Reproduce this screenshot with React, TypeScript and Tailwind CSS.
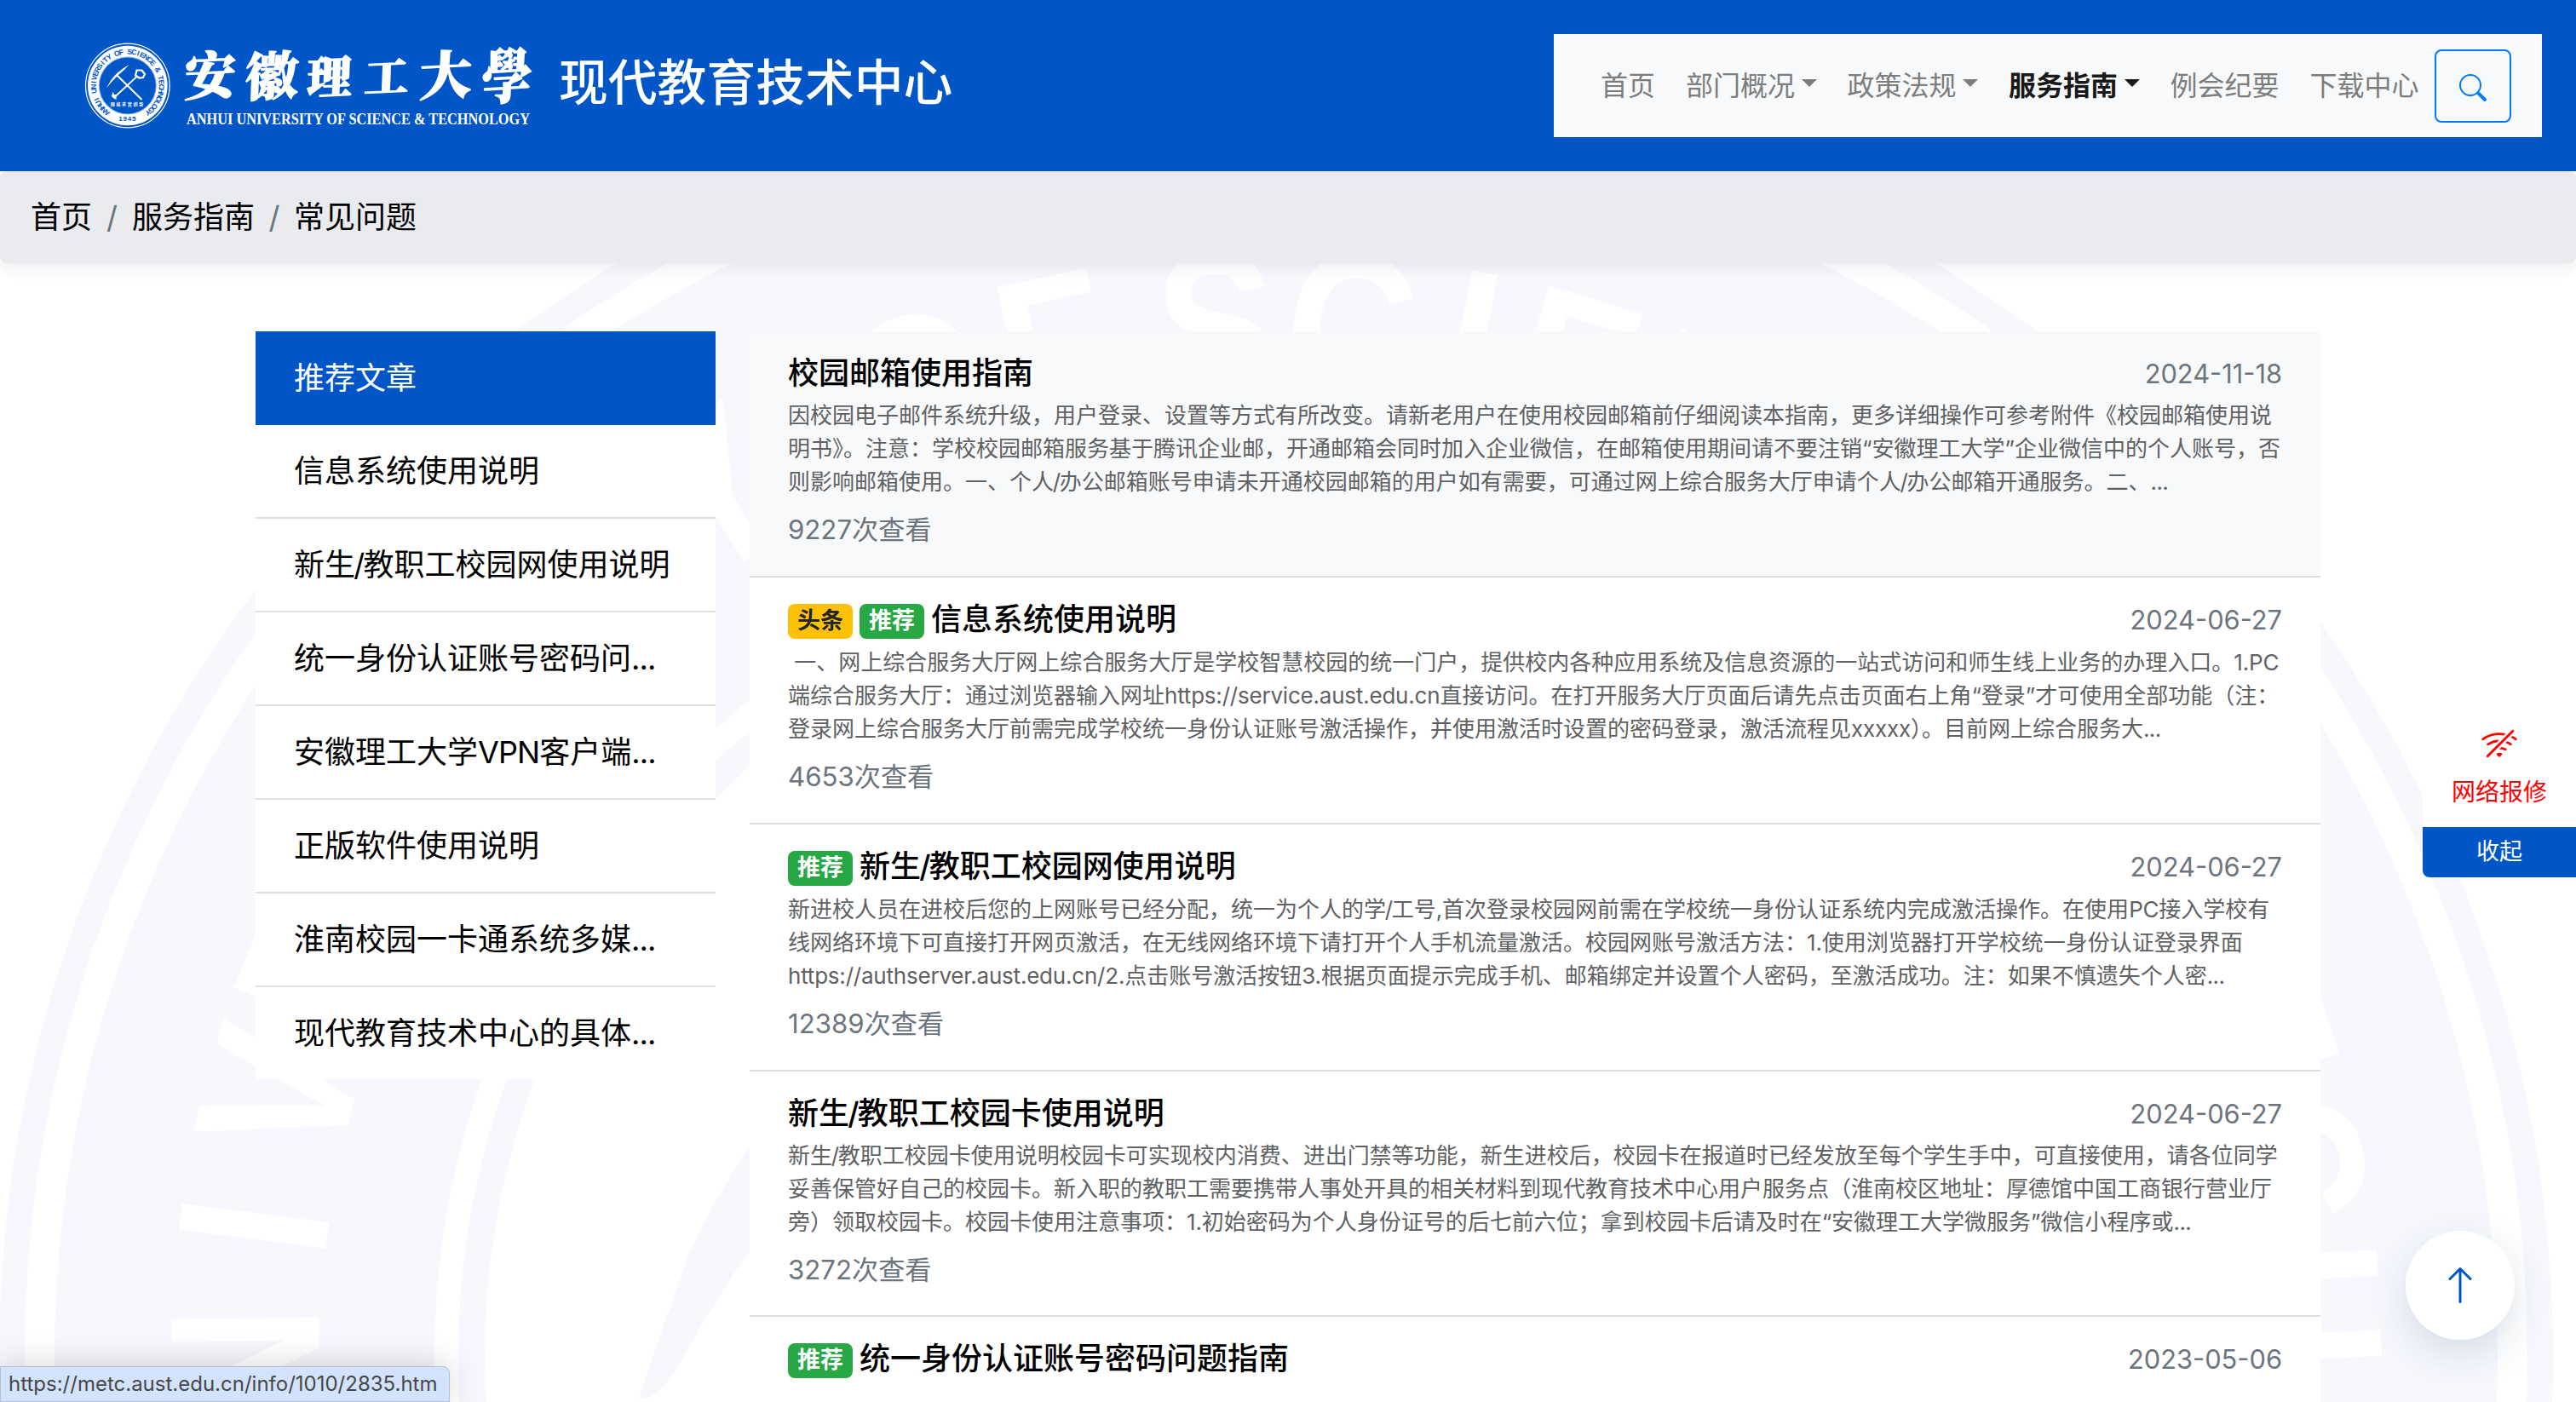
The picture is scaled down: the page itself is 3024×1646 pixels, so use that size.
import type { ReactNode } from "react";
import { BsArrowUp, BsSearch, BsWifiOff } from "react-icons/bs";

const polar = (cx: number, cy: number, r: number, deg: number) => {
  const a = (deg * Math.PI) / 180;
  return [cx + r * Math.sin(a), cy - r * Math.cos(a)];
};

type RingLetter = [string, number];

const WATERMARK_RING: RingLetter[] = [
  ["N", -90.8], ["I", -82.7], ["V", -75.2], ["E", -68], ["R", -61], ["S", -54], ["I", -48.7],
  ["T", -42], ["Y", -33], ["O", -20.2], ["F", -12.4], ["S", -3.3], ["C", 4.2], ["I", 10.9],
  ["E", 16.8], ["N", 24.2], ["C", 32], ["E", 39.5], ["&", 51], ["T", 64], ["E", 71.5],
  ["C", 79.1], ["H", 87.2],
];

/** Oversized pale university seal behind the page content. */
function Watermark() {
  const cx = 1498;
  const cy = 1593;
  return (
    <svg className="pointer-events-none absolute inset-0 h-[1646px] w-[3024px]" viewBox="0 0 3024 1646">
      <circle cx={cx} cy={cy} r="1484" fill="none" stroke="#f7f8fe" strokeWidth="30" />
      <circle cx={cx} cy={cy} r="1434" fill="#f7f8fe" />
      <circle cx={cx} cy={cy} r="988" fill="#fff" />
      <circle cx={cx} cy={cy} r="944.5" fill="none" stroke="#f7f8fe" strokeWidth="31" />
      {WATERMARK_RING.map(([ch, deg], i) => {
        const [x, y] = polar(cx, cy, 1123, deg);
        return (
          <text
            key={i}
            className="font-['Liberation_Sans',sans-serif] text-[252px] font-bold"
            fill="#fff"
            textAnchor="middle"
            transform={`translate(${x} ${y}) rotate(${deg}) scale(0.84 1)`}
          >
            {ch}
          </text>
        );
      })}
      <path fill="#f7f8fe" d="M1400 800Q1060 1040 879 1346L838 1413L806 1478Q772 1577 750 1642Q766 1642 778 1629L792 1612Q830 1540 879 1470Q1100 1150 1500 900Z" />
    </svg>
  );
}

const SEAL_TEXT = "ANHUI UNIVERSITY OF SCIENCE & TECHNOLOGY";

const CALLIGRAPHY = [
  { ch: "安", x: 216, y: 112, size: 60, sx: 1 },
  { ch: "徽", x: 288, y: 113, size: 61, sx: 1 },
  { ch: "理", x: 360, y: 111, size: 52, sx: 1 },
  { ch: "工", x: 427, y: 109, size: 48, sx: 1.08 },
  { ch: "大", x: 492, y: 112, size: 61, sx: 1 },
  { ch: "學", x: 565, y: 117, size: 70, sx: 0.84 },
];

function Brand() {
  const cx = 149.8;
  const cy = 100.5;
  return (
    <svg className="h-[200px] w-[1140px] shrink-0" viewBox="0 0 1140 200">
      <circle cx={cx} cy={cy} r="49.3" fill="none" stroke="#fff" strokeWidth="1.2" />
      <circle cx={cx} cy={cy} r="46.8" fill="#fff" />
      <circle cx={cx} cy={cy} r="33" fill="#0056c7" stroke="#0056c7" strokeOpacity=".45" strokeWidth="2" />
      <circle cx={cx} cy={cy} r="31.6" fill="#0056c7" />
      {SEAL_TEXT.split("").map((ch, i) => {
        const deg = -143 + (i * 286) / (SEAL_TEXT.length - 1);
        const [x, y] = polar(cx, cy, 37, deg);
        return (
          <text
            key={i}
            className="font-['Liberation_Sans',sans-serif] text-[8.6px] font-bold"
            fill="#0056c7"
            textAnchor="middle"
            transform={`translate(${x} ${y}) rotate(${deg})`}
          >
            {ch}
          </text>
        );
      })}
      <text x={cx} y="142.3" textAnchor="middle" fill="#0056c7" className="font-['Liberation_Sans',sans-serif] text-[8px] font-bold tracking-[0.8px]">
        1945
      </text>
      <g fill="none" stroke="#fff">
        <path strokeWidth="2" strokeLinecap="round" d="M137.5 88.5L166 116.5" />
        <path strokeWidth="1.8" strokeLinecap="round" d="M135 113.5L160 90.5" />
        <path strokeWidth="2.2" d="M160.5 82.5H166.500L170 87L168 91L163.500 91.500L159 88.500Z" />
      </g>
      <path fill="#fff" d="M151.500 76Q137 84 130 94.500Q126.500 100.500 125.500 103Q129 98 134 93L139 88Q146 82.500 151.500 76Z" />
      <path fill="#fff" d="M132.500 107.500L134 111L138 111.500L136.500 114L136.500 117L133.500 115.500L131 113Z" />
      <text x={cx} y="123.500" textAnchor="middle" fill="#fff" className="font-['Noto_Sans_CJK_SC',sans-serif] text-[5px] font-bold tracking-[1.7px]">
        團結求實創新
      </text>
      {CALLIGRAPHY.map(({ ch, x, y, size, sx }) => (
        <text
          key={ch}
          transform={`translate(${x} ${y}) scale(${sx} 1) skewX(-5) rotate(-3)`}
          fontSize={size}
          fill="#fff"
          stroke="#fff"
          strokeWidth="1.5"
          strokeLinejoin="round"
          className="font-['Noto_Serif_CJK_SC','Noto_Sans_CJK_SC',sans-serif] font-black"
        >
          {ch}
        </text>
      ))}
      <text x="219" y="146" textLength="403" lengthAdjust="spacingAndGlyphs" fill="#fff" className="font-['Liberation_Serif',serif] text-[18px] font-bold">
        ANHUI UNIVERSITY OF SCIENCE &amp; TECHNOLOGY
      </text>
      <text x="656" y="118" fill="#fff" className="font-['Noto_Sans_CJK_SC',sans-serif] text-[57.800px] font-medium">
        现代教育技术中心
      </text>
    </svg>
  );
}

const NAV = [
  { label: "首页" },
  { label: "部门概况", menu: true },
  { label: "政策法规", menu: true },
  { label: "服务指南", menu: true, active: true },
  { label: "例会纪要" },
  { label: "下载中心" },
];

function Header() {
  return (
    <header className="relative flex h-[201px] justify-between bg-[#0056c7]">
      <Brand />
      <nav className="mt-10 mr-10 flex h-[121px] w-[1160px] items-center bg-[#f8f9fa] pl-[55px]">
        {NAV.map((item) => (
          <a
            key={item.label}
            className={
              item.active
                ? "mr-9 flex items-center text-[32px] font-bold text-[#191919]"
                : "mr-9 flex items-center text-[32px] text-[#7c7d7d] last-of-type:mr-0"
            }
          >
            {item.label}
            {item.menu && (
              <span className="mt-[-6px] ml-[7.500px] h-0 w-0 border-x-[9.600px] border-t-[9.600px] border-x-transparent border-t-current" />
            )}
          </a>
        ))}
        <button className="ml-[18px] flex h-[86px] w-[90px] items-center justify-center rounded-lg border-2 border-[#007bff] pt-[5px] text-[#007bff]">
          <BsSearch className="size-8" />
        </button>
      </nav>
    </header>
  );
}

function Breadcrumb() {
  return (
    <div className="relative flex h-[108px] items-center rounded-lg bg-[#e9ebef] pl-9 text-[36px] shadow-[0_8px_16px_rgba(0,0,0,0.06)]">
      <span>首页</span>
      <span className="w-[47px] text-center text-[#6c757d]">/</span>
      <span>服务指南</span>
      <span className="w-[46px] text-center text-[#6c757d]">/</span>
      <span>常见问题</span>
    </div>
  );
}

/** Tightens Latin runs so that they sit evenly between Chinese characters. */
function Mixed({ text }: { text: string }) {
  return (
    <>
      {text.split(/([\x21-\x7e]+)/).map((run, i) => {
        if (run === "/") return <span key={i} className="mx-[-0.05em]">{run}</span>;
        if (run === "..." || run === "VPN") return <span key={i} className="tracking-[-0.025em]">{run}</span>;
        if (/^[\x21-\x7e]+$/.test(run)) return <span key={i} className="tracking-[-0.008em]">{run}</span>;
        return run;
      })}
    </>
  );
}

const SIDEBAR = [
  "信息系统使用说明",
  "新生/教职工校园网使用说明",
  "统一身份认证账号密码问...",
  "安徽理工大学VPN客户端...",
  "正版软件使用说明",
  "淮南校园一卡通系统多媒...",
  "现代教育技术中心的具体...",
];

function Sidebar() {
  return (
    <aside className="w-[540px] shrink-0 bg-white text-[36px]">
      <h2 className="flex h-[110px] items-center bg-[#0056c7] pl-[45px] text-white">推荐文章</h2>
      {SIDEBAR.map((t) => (
        <a key={t} className="block h-[110px] border-b-2 border-[#dfdfdf] pl-[45px] leading-[108px] whitespace-nowrap last:h-[108px] last:border-b-0">
          <Mixed text={t} />
        </a>
      ))}
    </aside>
  );
}

type Article = {
  title: string;
  date: string;
  lines: string[];
  views?: string;
  top?: boolean;
  rec?: boolean;
};

const ARTICLES: Article[] = [
  {
    title: "校园邮箱使用指南",
    date: "2024-11-18",
    lines: [
      "因校园电子邮件系统升级，用户登录、设置等方式有所改变。请新老用户在使用校园邮箱前仔细阅读本指南，更多详细操作可参考附件《校园邮箱使用说",
      "明书》。注意：学校校园邮箱服务基于腾讯企业邮，开通邮箱会同时加入企业微信，在邮箱使用期间请不要注销“安徽理工大学”企业微信中的个人账号，否",
      "则影响邮箱使用。一、个人/办公邮箱账号申请未开通校园邮箱的用户如有需要，可通过网上综合服务大厅申请个人/办公邮箱开通服务。二、...",
    ],
    views: "9227次查看",
  },
  {
    title: "信息系统使用说明",
    date: "2024-06-27",
    top: true,
    rec: true,
    lines: [
      "\u00a0一、网上综合服务大厅网上综合服务大厅是学校智慧校园的统一门户，提供校内各种应用系统及信息资源的一站式访问和师生线上业务的办理入口。1.PC",
      "端综合服务大厅：通过浏览器输入网址https://service.aust.edu.cn直接访问。在打开服务大厅页面后请先点击页面右上角“登录”才可使用全部功能（注：",
      "登录网上综合服务大厅前需完成学校统一身份认证账号激活操作，并使用激活时设置的密码登录，激活流程见xxxxx）。目前网上综合服务大...",
    ],
    views: "4653次查看",
  },
  {
    title: "新生/教职工校园网使用说明",
    date: "2024-06-27",
    rec: true,
    lines: [
      "新进校人员在进校后您的上网账号已经分配，统一为个人的学/工号,首次登录校园网前需在学校统一身份认证系统内完成激活操作。在使用PC接入学校有",
      "线网络环境下可直接打开网页激活，在无线网络环境下请打开个人手机流量激活。校园网账号激活方法：1.使用浏览器打开学校统一身份认证登录界面",
      "https://authserver.aust.edu.cn/2.点击账号激活按钮3.根据页面提示完成手机、邮箱绑定并设置个人密码，至激活成功。注：如果不慎遗失个人密...",
    ],
    views: "12389次查看",
  },
  {
    title: "新生/教职工校园卡使用说明",
    date: "2024-06-27",
    lines: [
      "新生/教职工校园卡使用说明校园卡可实现校内消费、进出门禁等功能，新生进校后，校园卡在报道时已经发放至每个学生手中，可直接使用，请各位同学",
      "妥善保管好自己的校园卡。新入职的教职工需要携带人事处开具的相关材料到现代教育技术中心用户服务点（淮南校区地址：厚德馆中国工商银行营业厅",
      "旁）领取校园卡。校园卡使用注意事项：1.初始密码为个人身份证号的后七前六位；拿到校园卡后请及时在“安徽理工大学微服务”微信小程序或...",
    ],
    views: "3272次查看",
  },
  { title: "统一身份认证账号密码问题指南", date: "2023-05-06", rec: true, lines: [] },
];

function Badge({ tone, children }: { tone: "warning" | "success"; children: ReactNode }) {
  return (
    <span
      className={
        tone === "warning"
          ? "mt-[5px] mr-2 flex h-[41px] w-[76px] items-center justify-center rounded-lg bg-[#ffc107] text-[27px] font-bold text-[#212529]"
          : "mt-[5px] mr-2 flex h-[41px] w-[76px] items-center justify-center rounded-lg bg-[#28a745] text-[27px] font-bold text-white"
      }
    >
      {children}
    </span>
  );
}

function ArticleRow({ a }: { a: Article }) {
  const badged = a.top || a.rec;
  return (
    <article
      className={
        badged
          ? "h-[290px] border-b-2 border-[#dcdddf] bg-white px-[45px] pt-6"
          : "h-[288px] border-b-2 border-[#dcdddf] bg-white px-[45px] pt-6 first:h-[289px] first:bg-[#f8f9fa]"
      }
    >
      <div className="flex h-[49px] items-center justify-between">
        <h3 className="flex items-center text-[36px] font-medium whitespace-nowrap">
          {a.top && <Badge tone="warning">头条</Badge>}
          {a.rec && <Badge tone="success">推荐</Badge>}
          <span>
            <Mixed text={a.title} />
          </span>
        </h3>
        <time className="pt-[3px] text-[30.800px] text-[#6c757d]">{a.date}</time>
      </div>
      <div
        className={
          badged
            ? "mt-[7px] text-[26px] leading-[39px] text-[#606163]"
            : "mt-[6px] text-[26px] leading-[39px] text-[#606163]"
        }
      >
        {a.lines.map((l) => (
          <p key={l} className="whitespace-nowrap">
            <Mixed text={l} />
          </p>
        ))}
      </div>
      <p className="mt-[13px] text-[31.200px] leading-[48px] text-[#6c757d]">{a.views}</p>
    </article>
  );
}

function FloatingPanel() {
  return (
    <div className="absolute top-[836px] right-0 w-[180px] overflow-hidden rounded-l-lg bg-white text-center text-[28px]">
      <a className="flex h-[135px] flex-col items-center pt-4 text-[#f00]">
        <BsWifiOff className="size-[44px]" />
        <span className="mt-[11px] leading-[46px]">网络报修</span>
      </a>
      <button className="flex h-[59px] w-full items-center justify-center bg-[#0056c7] text-[27px] text-white">收起</button>
    </div>
  );
}

export default function App() {
  return (
    <div className="relative h-[1646px] w-[3024px] overflow-hidden bg-white font-['Inter','Noto_Sans_CJK_SC',sans-serif] text-black" lang="zh-CN">
      <Watermark />
      <Header />
      <Breadcrumb />
      <main className="relative mt-20 flex items-start gap-10 pl-[300px]">
        <Sidebar />
        <section className="w-[1844px]">
          {ARTICLES.map((a) => (
            <ArticleRow key={a.title} a={a} />
          ))}
        </section>
      </main>
      <FloatingPanel />
      <button className="absolute top-[1445px] right-[72px] flex size-32 items-center justify-center rounded-full bg-white text-[#0056c7] shadow-[0_16px_48px_rgba(30,60,90,0.15)]">
        <BsArrowUp className="size-12" />
      </button>
      <div className="absolute bottom-0 left-0 flex h-[42px] w-[528px] items-center rounded-tr-lg border border-[#b5bfd2] bg-[#d3e3fd] pl-[9px] text-[24px] text-[#474747] shadow-[0_0_40px_rgba(0,0,0,0.18)]">
        https://metc.aust.edu.cn/info/1010/2835.htm
      </div>
    </div>
  );
}
